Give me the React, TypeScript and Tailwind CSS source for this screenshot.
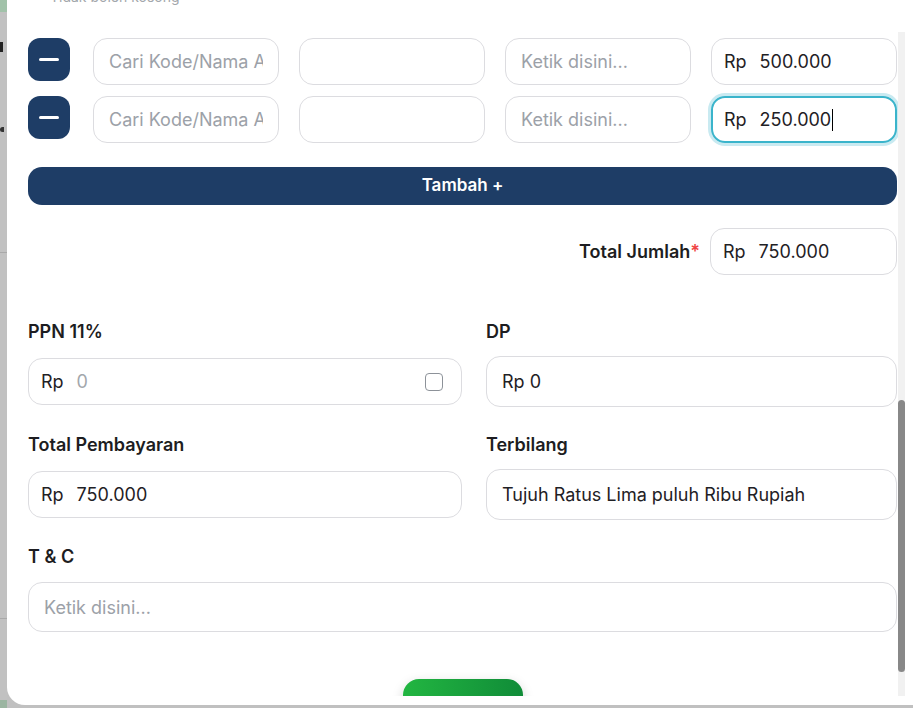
import React from 'react';

const itemRows = [
  { amount: '500.000', focused: false },
  { amount: '250.000', focused: true },
];

function Field({
  className = '',
  children,
}: {
  className?: string;
  children?: React.ReactNode;
}) {
  return (
    <div
      className={`flex items-center overflow-hidden whitespace-nowrap rounded-[14px] border border-[#dcdce0] bg-white text-[18px] ${className}`}
    >
      {children}
    </div>
  );
}

function Label({ children }: { children: React.ReactNode }) {
  return <div className="h-6 text-[18px] leading-6 font-semibold text-[#1d1d21]">{children}</div>;
}

export default function App() {
  return (
    <div className="flex h-[708px] w-[913px] overflow-hidden bg-[#c0c0c0] font-['Inter',sans-serif] text-[#1f2125]">
      {/* dimmed page behind the modal */}
      <div className="flex w-[7px] shrink-0 flex-col overflow-hidden">
        <div className="h-3 bg-[#a1c2a9]" />
        <div className="flex flex-1 flex-col bg-[#c1c1c1]">
          <div className="mt-[30px] h-[10px] w-[3px] bg-[#222]" />
          <div className="mt-[75px] h-[5px] w-[4px] rounded-l-full bg-[#333]" />
          <div className="mt-[120px] h-px bg-[#a9a9a9]" />
          <div className="mt-[365px] h-px bg-[#a9a9a9]" />
        </div>
        <div className="h-[8px] bg-[#9bb5a1]" />
      </div>

      {/* modal */}
      <div className="flex h-[705px] flex-1 flex-col rounded-bl-[18px] bg-white">
        <div className="flex h-[696px] overflow-hidden">
          <div className="flex-1 pl-[21px] pr-px">
            <div className="flex h-[38px] flex-col">
              <div className="-mt-[13px] pl-[22px] text-[14px] leading-5 text-[#a3a7ac]">Tidak boleh kosong</div>
            </div>

            <div className="flex flex-col gap-[11px]">
              {itemRows.map((row, i) => (
                <div key={i} className="flex items-start gap-[23px]">
                  <button className="flex h-[43px] w-[42px] shrink-0 items-center justify-center rounded-[12px] bg-[#1e3d66]">
                    <span className="h-[3px] w-[20px] rounded-full bg-white" />
                  </button>
                  <div className="grid flex-1 grid-cols-4 gap-5">
                    <Field className="h-[47px] px-[15px] text-[#9ca1a8]">
                      <span className="min-w-0 overflow-hidden">Cari Kode/Nama Akun</span>
                    </Field>
                    <Field className="h-[47px]" />
                    <Field className="h-[47px] px-[15px] text-[#9ca1a8]">Ketik disini...</Field>
                    {row.focused ? (
                      <div className="flex h-[47px] items-center rounded-[14px] border-2 border-[#3ab4cb] px-[11px] text-[18px] ring-[3px] ring-[#c9eaf1]">
                        <span>Rp</span>
                        <span className="ml-[13px]">{row.amount}</span>
                        <span className="ml-px h-[22px] w-px bg-black" />
                      </div>
                    ) : (
                      <Field className="h-[47px] px-[12px]">
                        <span>Rp</span>
                        <span className="ml-[13px]">{row.amount}</span>
                      </Field>
                    )}
                  </div>
                </div>
              ))}
            </div>

            <button className="mt-[24px] flex h-[38px] w-full items-center justify-center rounded-[14px] bg-[#1e3d66] text-[17px] font-semibold text-white">
              Tambah +
            </button>

            <div className="mt-[23px] flex items-center justify-end gap-[10px]">
              <div className="text-[18px] font-semibold text-[#1d1d21]">
                Total Jumlah<span className="text-[#ef4444]">*</span>
              </div>
              <Field className="h-[47px] w-[187px] px-[12px]">
                <span>Rp</span>
                <span className="ml-[13px]">750.000</span>
              </Field>
            </div>

            <div className="mt-[45px] grid grid-cols-[434px_411px] gap-x-6 gap-y-[26px]">
              <div className="flex flex-col gap-[14px]">
                <Label>PPN 11%</Label>
                <Field className="h-[47px] justify-between px-[12px]">
                  <div>
                    <span>Rp</span>
                    <span className="ml-[13px] text-[#a3a7ac]">0</span>
                  </div>
                  <span className="mr-[6px] h-[18px] w-[18px] rounded-[4px] border border-[#8d9299]" />
                </Field>
              </div>
              <div className="flex flex-col gap-[12px]">
                <Label>DP</Label>
                <Field className="h-[51px] px-[15px]">Rp 0</Field>
              </div>
              <div className="flex flex-col gap-[14px]">
                <Label>Total Pembayaran</Label>
                <Field className="h-[47px] px-[12px]">
                  <span>Rp</span>
                  <span className="ml-[13px]">750.000</span>
                </Field>
              </div>
              <div className="flex flex-col gap-[12px]">
                <Label>Terbilang</Label>
                <Field className="h-[51px] px-[15px]">Tujuh Ratus Lima puluh Ribu Rupiah</Field>
              </div>
            </div>

            <div className="mt-[25px]">
              <Label>T &amp; C</Label>
              <Field className="mt-[13px] h-[50px] px-[15px] text-[#9ca1a8]">Ketik disini...</Field>
            </div>

            <div className="mt-[47px] flex justify-center">
              <button className="h-[48px] w-[120px] rounded-[16px] bg-gradient-to-r from-[#22b641] to-[#108c38] shadow-[0_4px_12px_rgba(0,0,0,0.18)]" />
            </div>
          </div>

          {/* scrollbar */}
          <div className="mt-[32px] flex w-[7px] shrink-0 flex-col bg-[#f1f1f1]">
            <div className="mt-[368px] h-[272px] rounded-[4px] bg-[#888888]" />
          </div>
          <div className="w-[8px] shrink-0" />
        </div>
      </div>
    </div>
  );
}
